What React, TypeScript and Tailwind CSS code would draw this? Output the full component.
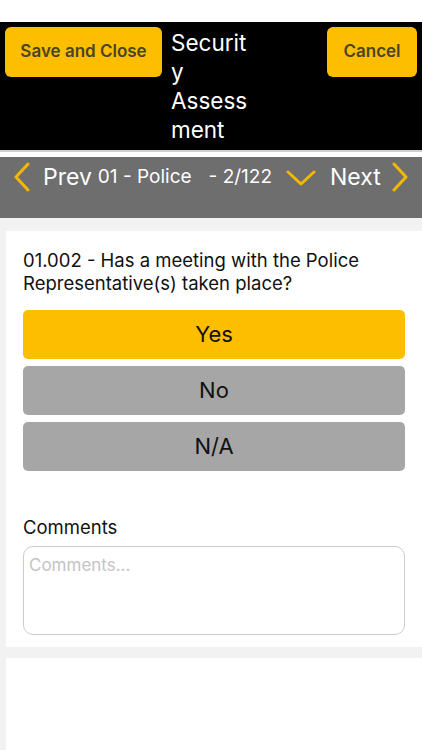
import React from "react";

const font = { fontFamily: "Inter, 'Noto Sans', 'Liberation Sans', sans-serif" };

function ChevLeft() {
  return (
    <svg width="18" height="30" viewBox="0 0 18 30" className="shrink-0">
      <polyline points="15,2 3,15 15,28" fill="none" stroke="#f5b800" strokeWidth="3" strokeLinecap="round" strokeLinejoin="round" />
    </svg>
  );
}
function ChevRight() {
  return (
    <svg width="18" height="30" viewBox="0 0 18 30" className="shrink-0">
      <polyline points="3,2 15,15 3,28" fill="none" stroke="#f5b800" strokeWidth="3" strokeLinecap="round" strokeLinejoin="round" />
    </svg>
  );
}
function ChevDown() {
  return (
    <svg width="30" height="18" viewBox="0 0 30 18" className="shrink-0">
      <polyline points="2,3 15,15 28,3" fill="none" stroke="#f5b800" strokeWidth="3" strokeLinecap="round" strokeLinejoin="round" />
    </svg>
  );
}

export default function App() {
  return (
    <div style={font} className="w-[422px] h-[750px] bg-white overflow-hidden flex flex-col">
      <div className="h-[22px] bg-white shrink-0" />
      {/* Header */}
      <div className="bg-black h-[128px] shrink-0 flex justify-between pt-[5px] px-[5px]">
        <div className="flex items-start">
          <button className="w-[157px] h-[50px] rounded-[6px] bg-[#fdbe00] text-[#4a4526] text-[17px] font-semibold">
            Save and Close
          </button>
          <div className="ml-[9px] w-[86px] text-white text-[22.5px] leading-[29px] break-words mt-[1px]">
            Security Assessment
          </div>
        </div>
        <button className="w-[90px] h-[50px] rounded-[6px] bg-[#fdbe00] text-[#4a4526] text-[17px] font-semibold">
          Cancel
        </button>
      </div>
      <div className="h-[2px] bg-[#cfcfcf] shrink-0" />
      <div className="h-[5px] bg-white shrink-0" />
      {/* Nav */}
      <div className="h-[61px] bg-[#6e6e6e] shrink-0">
        <div className="h-[40px] flex items-center text-white">
          <div className="ml-[13px]"><ChevLeft /></div>
          <span className="ml-[12px] text-[23px]">Prev</span>
          <span className="ml-[6px] text-[19px]">01 - Police</span>
          <span className="ml-[17px] text-[19px]">- 2/122</span>
          <div className="ml-[14px] mt-[2px]"><ChevDown /></div>
          <span className="ml-[14px] text-[23px]">Next</span>
          <div className="ml-[10px]"><ChevRight /></div>
        </div>
      </div>
      {/* Body */}
      <div className="flex-1 bg-[#f2f2f2] pt-[13px] pl-[6px] flex flex-col">
        <div className="bg-white pt-[18px] pb-[12px] pl-[17px] pr-[17px]">
          <div className="text-[18.5px] leading-[23px] text-[#111]">
            01.002 - Has a meeting with the Police Representative(s) taken place?
          </div>
          <div className="mt-[15px] flex flex-col gap-[7px]">
            <button className="h-[49px] rounded-[5px] bg-[#fdbe00] text-[22px] text-[#111]">Yes</button>
            <button className="h-[49px] rounded-[5px] bg-[#a6a6a6] text-[22px] text-[#111]">No</button>
            <button className="h-[49px] rounded-[5px] bg-[#a6a6a6] text-[22px] text-[#111]">N/A</button>
          </div>
          <div className="mt-[45px] text-[18.5px] leading-[23px] text-[#111]">Comments</div>
          <textarea
            placeholder="Comments..."
            style={font}
            className="mt-[7px] block w-full h-[89px] rounded-[10px] border border-[#cccccc] px-[5px] py-[6px] text-[17px] placeholder:text-[#c4c4c4] resize-none outline-none"
          />
        </div>
        <div className="h-[11px] shrink-0" />
        <div className="flex-1 bg-white" />
      </div>
    </div>
  );
}
